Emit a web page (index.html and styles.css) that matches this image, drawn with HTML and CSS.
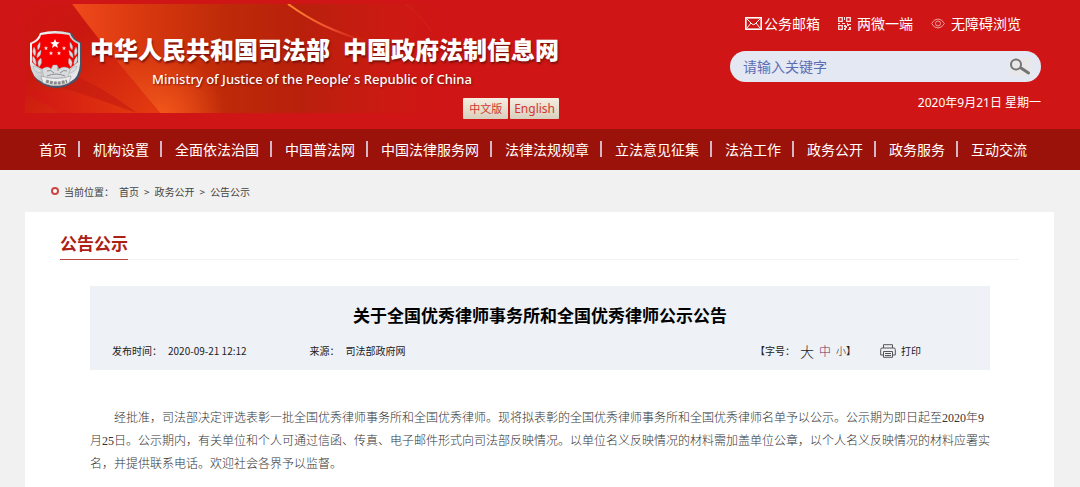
FILE: index.html
```html
<!DOCTYPE html>
<html lang="zh-CN">
<head>
<meta charset="utf-8">
<meta name="viewport" content="width=device-width, initial-scale=1">
<title>关于全国优秀律师事务所和全国优秀律师公示公告</title>
<link rel="stylesheet" href="styles.css">
</head>
<body>
<header class="header">
  <svg class="banner-art" width="420" height="109" viewBox="0 0 420 109" aria-hidden="true">
    <defs>
      <linearGradient id="sweep" x1="0" y1="0" x2="1" y2="0">
        <stop offset="0" stop-color="#f04a1c"/><stop offset=".16" stop-color="#dc3a10"/><stop offset=".42" stop-color="#bd2a08"/><stop offset=".62" stop-color="#b9200c"/><stop offset=".85" stop-color="#cc1a12"/><stop offset="1" stop-color="#cf1515"/>
      </linearGradient>
      <linearGradient id="fold" x1="0" y1="0" x2="1" y2="1">
        <stop offset="0" stop-color="#cf1515"/><stop offset=".35" stop-color="#c9180f"/><stop offset="1" stop-color="#e43c10"/>
      </linearGradient>
      <linearGradient id="low" x1="0" y1="0" x2="1" y2="0">
        <stop offset="0" stop-color="#d01515"/><stop offset="1" stop-color="#e2380d"/>
      </linearGradient>
      <radialGradient id="glow" cx="135" cy="115" r="65" gradientUnits="userSpaceOnUse">
        <stop offset="0" stop-color="#f4591c"/><stop offset="1" stop-color="#f4591c" stop-opacity="0"/>
      </radialGradient>
      <linearGradient id="ray" x1="0" y1="0" x2="1" y2="0">
        <stop offset="0" stop-color="#ff8a2a"/><stop offset=".55" stop-color="#ee4a30"/><stop offset="1" stop-color="#d8301c" stop-opacity="0"/>
      </linearGradient>
    </defs>
    <path fill="url(#sweep)" d="M47 0H420V109H135C112 81 73 36 47 0Z"/>
    <path fill="url(#glow)" d="M47 0H420V109H135C112 81 73 36 47 0Z"/>
    <path fill="url(#fold)" d="M0 0H47C73 36 112 81 135 109H0Z"/>
    <path fill="url(#low)" d="M0 88C38 83 77 92 112 109H35Z"/>
    <path fill="#c51b10" opacity=".6" d="M52 73C78 84 94 96 112 109C80 98 55 88 30 82Z"/>
    <path fill="none" stroke="url(#ray)" stroke-width="2" d="M263 0C285 16 308 28 344 38"/>
    <path fill="none" stroke="#dc3420" opacity=".4" d="M380 0Q394 9 406 27"/>
  </svg>
  <div class="brand">
    <svg class="emblem" width="54" height="60" viewBox="0 0 54 60" role="img" aria-label="中国司法徽章">
      <defs><linearGradient id="silver" x1="0" y1="0" x2="1" y2="1"><stop offset="0" stop-color="#fff"/><stop offset=".55" stop-color="#c7cbce"/><stop offset="1" stop-color="#f7f7f7"/></linearGradient></defs>
      <path fill="#4c5368" d="M12 3Q27 0 43 3Q45 10 53 13V34Q52 50 42 54Q27 62 13 54Q2 48 2 34V13Q10 10 12 3Z"/>
      <path fill="url(#silver)" d="M11 3Q26-1 41 3Q43 10 51 13V34Q50 48 41 52Q27 60 13 52Q3 48 1 34V13Q9 10 11 3Z"/>
      <path fill="#f40000" d="M12 5Q26 2 40 5Q42 11 49 14V32Q44 36 39 40H15Q6 36 3 32V14Q11 11 12 5Z"/>
      <path fill="#fff" d="m26 9 1.3 3.1 3.4.3-2.6 2.2.8 3.3L26 16.1l-2.9 1.8.8-3.3-2.6-2.2 3.4-.3Z"/>
      <g fill="#ffe7e1"><path id="small-star" d="m17 16 .6 1.4 1.5.1-1.1 1 .3 1.5-1.3-.8-1.3.8.3-1.5-1.1-1 1.5-.1Z"/><use href="#small-star" x="5" y="5"/><use href="#small-star" x="13" y="5"/><use href="#small-star" x="18"/></g>
      <g fill="#d9dcde" stroke="#93979a" stroke-width=".4">
        <path d="M11 12Q7 16 9 20Q12 17 11 12ZM5 17Q2 22 6 26Q8 21 5 17ZM12 20Q7 23 8 28Q13 25 12 20ZM4 26Q2 32 7 35Q8 30 4 26ZM12 28Q7 31 10 37Q14 33 12 28ZM4 36Q5 43 13 43Q11 37 4 36Z"/>
        <path d="M41 12Q45 16 43 20Q40 17 41 12ZM47 17Q50 22 46 26Q44 21 47 17ZM40 20Q45 23 44 28Q39 25 40 20ZM48 26Q50 32 45 35Q44 30 48 26ZM40 28Q45 31 42 37Q38 33 40 28ZM48 36Q47 43 39 43Q42 37 48 36Z"/>
        <path d="M13 39Q19 35 22 39L24 35H28L30 39Q35 35 41 39L39 48H15Z"/>
      </g>
      <path fill="none" stroke="#777" stroke-width=".8" d="M18 41q4-2 7 2m4-6v4m2 2q4-4 7-2m-20 5q9-4 18 0"/>
      <path fill="#eee" stroke="#909396" stroke-width=".6" d="M12 46Q27 51 42 46L40 53Q27 58 14 53Z"/>
      <path stroke="#8a8a8a" stroke-width="3" stroke-dasharray="3 1" fill="none" d="M17 51Q27 55 38 51"/>
    </svg>
    <div class="identity">
      <div class="site-name"><span>中华人民共和国司法部</span><span>中国政府法制信息网</span></div>
      <div class="site-english">Ministry of Justice of the People’ s Republic of China</div>
      <div class="languages"><a href="#">中文版</a><a href="#">English</a></div>
    </div>
  </div>
  <div class="tools">
    <div class="quick-links">
      <a href="#" class="mail-link"><svg width="17" height="13" viewBox="0 0 17 13" fill="none" stroke="#fff" aria-hidden="true"><rect x=".8" y=".8" width="15.4" height="11.4" stroke-width="1.6"/><path d="m2 2 5 5q1.5 1.4 3 0l5-5M2 11l4-5m9 5-4-5"/></svg>公务邮箱</a>
      <a href="#" class="qr-link"><svg width="13" height="13" viewBox="0 0 13 13" aria-hidden="true"><path fill="none" stroke="#fbdcdc" stroke-width="1.3" d="M.7.7h3.6v3.6H.7zM8.7.7h3.6v3.6H8.7zM.7 8.7h3.6v3.6H.7z"/><path fill="#fbdcdc" d="M6 0h1v3H6zM0 6h2v1H0zm4 0h3v1H4zm5 0h1v1h3v1h-2v1H9zM6 8h2v1h1v2H8v2H6v-2h1v-1H6zm5 2h2v3h-3v-1h1z"/></svg>两微一端</a>
      <a href="#" class="eye-link"><svg width="14" height="11" viewBox="0 0 14 11" fill="none" stroke="#f0a09e" aria-hidden="true"><path d="M.6 5.5Q3 1 7 1t6.4 4.5Q11 10 7 10T.6 5.5Z"/><circle cx="7" cy="5.5" r="2.5"/></svg>无障碍浏览</a>
    </div>
    <form class="search">
      <input type="search" aria-label="搜索关键字" placeholder="请输入关键字">
      <button type="submit" aria-label="搜索"><svg width="22" height="18" viewBox="0 0 22 18" fill="none" stroke="#747474" aria-hidden="true"><circle cx="7" cy="6.5" r="5" stroke-width="2"/><path d="m12 10 7.5 5" stroke-width="3" stroke-linecap="round"/></svg></button>
    </form>
    <time class="today" datetime="2020-09-21">2020年9月21日 星期一</time>
  </div>
</header>
<nav class="nav" aria-label="主导航">
  <a href="#">首页</a><a href="#">机构设置</a><a href="#">全面依法治国</a><a href="#">中国普法网</a><a href="#">中国法律服务网</a><a href="#">法律法规规章</a><a href="#">立法意见征集</a><a href="#">法治工作</a><a href="#">政务公开</a><a href="#">政务服务</a><a href="#">互动交流</a>
</nav>
<nav class="breadcrumb" aria-label="当前位置">
  <i class="marker"></i><span class="crumb-label">当前位置：</span><a href="#">首页</a><span>&gt;</span><a href="#">政务公开</a><span>&gt;</span><a href="#">公告公示</a>
</nav>
<main class="page">
  <div class="section-head"><h2>公告公示</h2></div>
  <article class="article">
    <header class="article-head">
      <h1>关于全国优秀律师事务所和全国优秀律师公示公告</h1>
      <div class="meta">
        <span class="published">发布时间：<time datetime="2020-09-21T12:12">2020-09-21 12:12</time></span>
        <span class="source">来源：<span>司法部政府网</span></span>
        <div class="font-size"><span>【字号：</span><button type="button" class="large">大</button><button type="button" class="medium">中</button><button type="button">小</button><span>】</span></div>
        <button type="button" class="print"><svg width="16" height="14" viewBox="0 0 16 14" fill="none" stroke="#555" aria-hidden="true"><path d="M3.5 4V.7h9V4M3 11H.7V5.5Q.7 4 2 4h12q1.3 0 1.3 1.5V11H13M3.5 7.5h9v5.8h-9zM5 9.5h6m-6 2h6"/></svg>打印</button>
      </div>
    </header>
    <p class="body-text">经批准，司法部决定评选表彰一批全国优秀律师事务所和全国优秀律师。现将拟表彰的全国优秀律师事务所和全国优秀律师名单予以公示。公示期为即日起至2020年9月25日。公示期内，有关单位和个人可通过信函、传真、电子邮件形式向司法部反映情况。以单位名义反映情况的材料需加盖单位公章，以个人名义反映情况的材料应署实名，并提供联系电话。欢迎社会各界予以监督。</p>
  </article>
</main>
</body>
</html>
```
FILE: styles.css
```css
* { box-sizing: border-box; }
body {
  margin: 0;
  min-height: 100vh;
  display: flex;
  flex-direction: column;
  background: #f1f1f1;
  color: #333;
  font-family: "Noto Sans CJK SC", sans-serif;
}
a { color: inherit; text-decoration: none; }
button { border: 0; padding: 0; background: none; color: inherit; font: inherit; cursor: pointer; }
svg { display: block; flex: none; }

.header {
  position: relative;
  display: flex;
  justify-content: space-between;
  min-height: 129px;
  padding: 0 39px 0 29px;
  background: #cf1515;
  color: #fff;
}
.banner-art { position: absolute; left: 25px; top: 4px; }
.brand { position: relative; display: flex; gap: 7px; padding-top: 30px; }
.site-name {
  display: flex;
  gap: 13px;
  padding-top: 3px;
  font-size: 24px;
  line-height: 32px;
  font-weight: 900;
  white-space: nowrap;
  text-shadow: 1px 2px 2px #7b120b;
}
.site-english {
  padding-left: 62px;
  font-family: "Noto Sans", sans-serif;
  font-size: 13px;
  font-weight: 500;
  line-height: 28px;
  text-shadow: 1px 1px 2px #7b120b;
}
.languages { display: flex; justify-content: flex-end; gap: 2px; padding-top: 5px; }
.languages a {
  padding: 0 6px;
  border-radius: 1px;
  background: linear-gradient(#f5eee1, #d8cfbd);
  color: #d2372e;
  font-family: "Noto Sans", "Noto Sans CJK SC", sans-serif;
  font-size: 11px;
  line-height: 21px;
}
.languages a + a { padding: 0 4px; font-size: 12px; }

.tools { display: flex; flex-direction: column; width: 311px; padding-top: 13px; }
.quick-links {
  display: flex;
  justify-content: flex-end;
  gap: 18px;
  padding-right: 20px;
  font-size: 14px;
  line-height: 20px;
}
.quick-links a { display: flex; align-items: center; gap: 6px; }
.quick-links .mail-link { gap: 2px; }
.search {
  display: flex;
  align-items: center;
  height: 31px;
  margin-top: 18px;
  padding: 0 10px 0 13px;
  border-radius: 16px;
  background: #e3e8f3;
}
.search input {
  flex: 1;
  min-width: 0;
  padding: 0 0 2px;
  border: 0;
  outline: 0;
  background: transparent;
  color: #4d61ad;
  font: 14px/20px "Noto Sans CJK SC", sans-serif;
}
.search input::placeholder { color: #5c6db5; opacity: 1; }
.search button { background: #e8e8e8; }
.today {
  align-self: flex-end;
  margin-top: 12px;
  font-family: "Noto Sans", "Noto Sans CJK SC", sans-serif;
  font-size: 12px;
  line-height: 18px;
}

.nav {
  display: flex;
  align-items: center;
  min-height: 41px;
  padding: 0 0 2px 39px;
  background: #9b120a;
  color: #fff;
  font-size: 14px;
  line-height: 20px;
  white-space: nowrap;
}
.nav a { display: flex; align-items: center; }
.nav a + a::before {
  content: "";
  width: 2px;
  height: 16px;
  margin: 0 13px 0 11px;
  background: #d5b8c5;
}

.breadcrumb {
  display: flex;
  align-items: center;
  gap: 5px;
  height: 42px;
  padding-left: 51px;
  color: #444;
  font-size: 10px;
}
.marker { width: 8px; height: 8px; border: 2px solid #cf4547; border-radius: 50%; background: #fff; }

.page { flex: 1; margin: 0 26px 0 25px; padding: 19px 35px; background: #fff; }
.section-head { display: flex; border-bottom: 1px solid #f2f2f2; }
.section-head h2 {
  margin: 0 0 -1px;
  padding-bottom: 4px;
  border-bottom: 1px solid #b9473d;
  color: #ac2015;
  font-size: 17px;
  line-height: 24px;
}
.article { padding: 26px 29px 0 30px; }
.article-head { min-height: 84px; padding: 16px 22px 0; background: #eef1f6; }
.article-head h1 {
  margin: 0;
  color: #000;
  font-size: 17px;
  line-height: 26px;
  text-align: center;
}
.meta {
  display: flex;
  align-items: center;
  margin-top: 13px;
  padding-right: 47px;
  color: #222;
  font-size: 10px;
  line-height: 20px;
}
.published time, .source span { margin-left: 6px; }
.source { margin-left: 63px; }
.font-size { display: flex; align-items: center; gap: 5px; margin-left: auto; }
.font-size span:last-child { margin-left: -5px; }
.font-size button { font-weight: 300; }
.font-size .large { font-size: 14px; }
.font-size .medium { font-size: 12px; color: #712b5c; }
.print { display: flex; align-items: center; gap: 5px; margin-left: 24px; }
.body-text {
  margin: 37px 0 0;
  font-family: "Liberation Serif", "Noto Sans CJK SC", serif;
  font-size: 12px;
  font-weight: 300;
  line-height: 23px;
  text-indent: 2em;
}
```
